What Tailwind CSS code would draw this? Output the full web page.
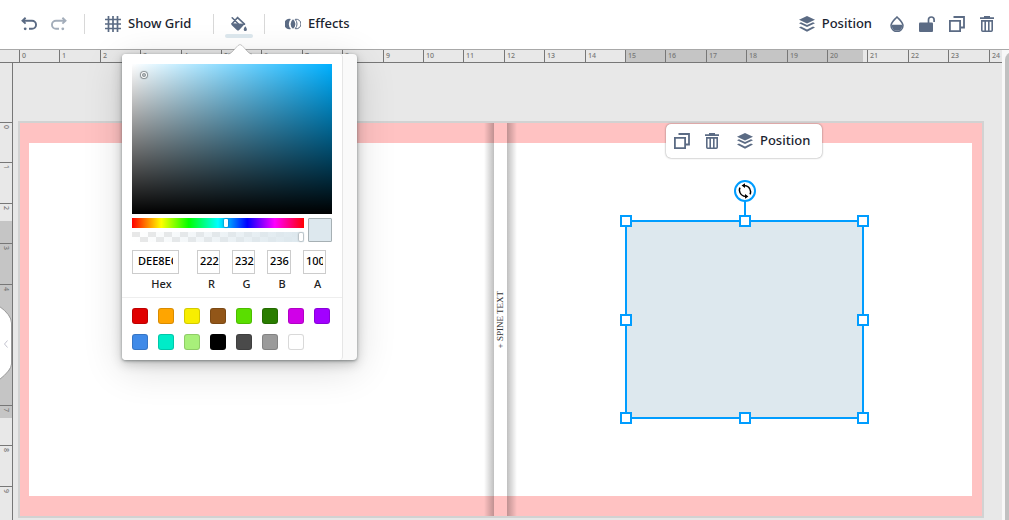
<!DOCTYPE html>
<html lang="en">
<head>
<meta charset="utf-8">
<meta name="viewport" content="width=device-width, initial-scale=1">
<title>Cover editor</title>
<script src="https://cdn.jsdelivr.net/npm/@tailwindcss/browser@4"></script>
</head>
<body class="flex h-screen flex-col overflow-hidden bg-white font-['Noto_Sans',sans-serif] text-[13px] font-medium text-[#1b2430]">

<!-- Icon sprite -->
<svg class="hidden" aria-hidden="true">
  <symbol id="undo" viewBox="0 0 16 16"><path d="M4.600 1.800L1.500 4.700l3.100 2.900M2 4.700h9a3.900 3.900 0 0 1 0 8.100H8" fill="none" stroke="currentColor" stroke-width="1.900"/><circle cx="4.200" cy="12.800" r="1.400" fill="currentColor"/></symbol>
  <symbol id="grid" viewBox="0 0 16 16"><path d="M3.500 0v16M8 0v16M12.500 0v16M0 3.500h16M0 8h16M0 12.500h16" fill="none" stroke="currentColor" stroke-width="1.700"/></symbol>
  <symbol id="bucket" viewBox="0 0 16 16"><path d="M1.200 1.800l6 6M6.600 1.400L1.300 7.600M6.600 1.600l6.900 6.600" stroke="currentColor" stroke-width="1.600" stroke-linecap="round" fill="none"/><path d="M.2 7.300L14 7.800 8.200 14q-1.200 1.200-2.400 0L.8 9.300Q0 8.300.2 7.300z" fill="currentColor"/><path d="M14.300 10.300q1.600 2 1.600 3.200a1.600 1.600 0 0 1-3.200 0q0-1.200 1.600-3.200z" fill="currentColor"/></symbol>
  <symbol id="effects" viewBox="0 0 16 16"><path d="M5.900 3a5.200 5.200 0 1 0 0 10a7 7 0 0 1 0-10z" fill="currentColor"/><path d="M8 3.200a6 6 0 0 1 0 9.600a6 6 0 0 1 0-9.600z" fill="currentColor"/><path d="M10.200 3.300a4.800 4.800 0 1 1 0 9.400a7 7 0 0 0 0-9.400z" fill="none" stroke="currentColor" stroke-width="1"/></symbol>
  <symbol id="layers" viewBox="0 0 16 16"><path d="M8 0l8 3.700-8 3.700-8-3.700z" fill="currentColor"/><path d="M0 7.200l2-.9 6 2.800 6-2.800 2 .9-8 3.900zM0 11.500l2-.9 6 2.800 6-2.800 2 .9L8 15.800z" fill="currentColor"/></symbol>
  <symbol id="drop" viewBox="0 0 16 16"><path d="M8 .9c3 3.200 6 5.500 6 8.700a6 6 0 0 1-12 0C2 6.400 5 4.100 8 .9z" fill="none" stroke="currentColor" stroke-width="1.500"/><path d="M2.500 8.700h11q-.3 6-5.500 6t-5.500-6z" fill="currentColor"/></symbol>
  <symbol id="unlock" viewBox="0 0 16 16"><rect y="6.500" width="14" height="9.500" rx="1" fill="currentColor"/><path d="M9.500 7V3.800a2.800 2.800 0 0 1 5.600 0V6" fill="none" stroke="currentColor" stroke-width="1.700"/></symbol>
  <symbol id="copy" viewBox="0 0 16 16"><path d="M.9 4.900h10.200v10.200H.9zM4.500 1h10.500v10.500h-3" fill="none" stroke="currentColor" stroke-width="1.800"/></symbol>
  <symbol id="trash" viewBox="0 0 16 16"><path d="M5 0h6v1.300h4V3H1V1.300h4z" fill="currentColor"/><path d="M2.800 4.500V14.300q0 .9.900.9h8.600q.9 0 .9-.9V4.500M2 4.900h12M6.200 5v10M9.800 5v10" fill="none" stroke="currentColor" stroke-width="1.600"/></symbol>
</svg>

<header class="flex h-[50px] shrink-0 items-center justify-between border-b border-[#a8a8a8] bg-white pr-3.5 pb-px pl-[21px]">
  <div class="flex items-center">
    <button class="text-[#5b6b84]" aria-label="Undo"><svg class="size-4"><use href="#undo"/></svg></button>
    <button class="ml-3.5 text-[#a3adba]" aria-label="Redo"><svg class="size-4 -scale-x-100"><use href="#undo"/></svg></button>
    <span class="ml-[17px] h-5 w-px bg-[#d8d8d8]"></span>
    <button class="ml-5 flex w-22 items-center gap-[7px] whitespace-nowrap"><svg class="size-4 shrink-0 text-[#5b6b84]"><use href="#grid"/></svg>Show Grid</button>
    <span class="ml-5 h-5 w-px bg-[#d8d8d8]"></span>
    <button class="relative mx-[11px] flex h-7 w-7 items-center justify-center text-[#5b6b84]" aria-label="Fill color"><svg class="size-4"><use href="#bucket"/></svg><span class="absolute inset-x-0 bottom-0 h-1 rounded-full bg-[#dde8ee]"></span></button>
    <span class="h-5 w-px bg-[#d8d8d8]"></span>
    <button class="ml-5 flex items-center gap-[7px]"><svg class="size-4 text-[#5b6b84]"><use href="#effects"/></svg>Effects</button>
  </div>
  <div class="flex items-center gap-3.5 text-[#5b6b84]">
    <button class="mr-[3px] flex items-center gap-[7px]"><svg class="size-4"><use href="#layers"/></svg><span class="text-[#1b2430]">Position</span></button>
    <button aria-label="Opacity"><svg class="size-4"><use href="#drop"/></svg></button>
    <button aria-label="Unlock"><svg class="size-4"><use href="#unlock"/></svg></button>
    <button aria-label="Duplicate"><svg class="size-4"><use href="#copy"/></svg></button>
    <button aria-label="Delete"><svg class="size-4"><use href="#trash"/></svg></button>
  </div>
</header>

<main class="relative flex min-h-0 flex-1 bg-[#f8f8f8]">
  <div class="flex min-w-0 flex-1 flex-col bg-[#e8e8e8]">
    <div id="ruler-x" class="relative h-[13px] shrink-0 overflow-hidden border-b border-[#777] text-[7px] leading-[12px] text-[#777]">
      <div class="absolute inset-y-0 left-[625px] w-[238px] bg-[#c5c5c5]"></div>
    </div>
    <div class="flex min-h-0 flex-1">
      <div id="ruler-y" class="relative w-[13px] shrink-0 overflow-hidden border-r border-[#777] text-[7px] leading-[12px] text-[#777]">
        <div class="absolute inset-x-0 top-[158px] h-[197px] bg-[#c5c5c5]"></div>
      </div>

      <section class="relative min-w-0 flex-1 overflow-hidden" aria-label="Canvas">
        <!-- Cover spread -->
        <div class="absolute top-[58px] left-[5px] h-[397px] w-[966px] border-2 border-[#d2d2d2] bg-[#ffc2c2]">
          <div class="h-full pt-5 pr-[10px] pb-5 pl-[9px]"><div class="h-full bg-white"></div></div>
          <div class="absolute inset-y-0 left-[464px] flex w-[33px]">
            <div class="w-[10px] bg-linear-to-r from-transparent to-black/25"></div>
            <div class="flex w-[13px] items-center justify-center"><span class="rotate-180 font-['Liberation_Serif',serif] text-[9px] leading-none font-normal whitespace-nowrap text-[#333] [writing-mode:vertical-rl]">+ SPINE TEXT</span></div>
            <div class="w-[10px] bg-linear-to-r from-black/25 to-transparent"></div>
          </div>
        </div>

        <!-- Selected rectangle -->
        <div class="absolute top-[157px] left-[612px] h-[199px] w-[239px] border-2 border-[#009dff] bg-[#dde8ee]">
          <div class="absolute -inset-px">
            <span class="absolute -top-5 left-1/2 h-5 w-[2px] -translate-x-1/2 bg-[#009dff]"></span>
            <button class="absolute -top-[41px] left-1/2 flex size-[22px] -translate-x-1/2 items-center justify-center rounded-full border-2 border-[#009dff] bg-white text-black" aria-label="Rotate">
              <svg class="size-4 shrink-0" viewBox="0 0 16 16"><path d="M6.500 2.600Q12.800 2.600 13.600 8.500q.1 1.500-.6 2.800M9.500 13.400Q3.200 13.400 2.400 7.500q-.1-1.500.6-2.800" fill="none" stroke="currentColor" stroke-width="1.500"/><path d="M8 .2v4.800L4.600 2.600zM8 11v4.800l3.400-2.400z" fill="currentColor"/></svg>
            </button>
            <span class="absolute top-0 left-0 size-3 -translate-1/2 border-2 border-[#009dff] bg-white"></span>
            <span class="absolute top-0 left-1/2 size-3 -translate-1/2 border-2 border-[#009dff] bg-white"></span>
            <span class="absolute top-0 left-full size-3 -translate-1/2 border-2 border-[#009dff] bg-white"></span>
            <span class="absolute top-1/2 left-0 size-3 -translate-1/2 border-2 border-[#009dff] bg-white"></span>
            <span class="absolute top-1/2 left-full size-3 -translate-1/2 border-2 border-[#009dff] bg-white"></span>
            <span class="absolute top-full left-0 size-3 -translate-1/2 border-2 border-[#009dff] bg-white"></span>
            <span class="absolute top-full left-1/2 size-3 -translate-1/2 border-2 border-[#009dff] bg-white"></span>
            <span class="absolute top-full left-full size-3 -translate-1/2 border-2 border-[#009dff] bg-white"></span>
          </div>
        </div>

        <!-- Context toolbar -->
        <div class="absolute top-[61px] left-[653px] flex h-[34px] items-center rounded-[5px] bg-white pr-3 pl-2 text-[#5b6b84] shadow-[0_0_2px_rgba(0,0,0,0.5)]">
          <button aria-label="Duplicate"><svg class="size-4"><use href="#copy"/></svg></button>
          <button class="ml-3.5" aria-label="Delete"><svg class="size-4"><use href="#trash"/></svg></button>
          <button class="ml-[17px] flex items-center gap-[7px]"><svg class="size-4"><use href="#layers"/></svg><span class="text-[#1b2430]">Position</span></button>
        </div>
      </section>
    </div>
  </div>

  <div class="w-[7px] shrink-0 overflow-hidden bg-[#f8f8f8] pt-0.5 pl-[3px]"><div class="h-full w-2 rounded-tl-full bg-[#c1c1c1]"></div></div>

  <!-- Side panel handle -->
  <button class="absolute top-[254px] left-0 h-20 w-3" aria-label="Collapse panel">
    <svg class="h-20 w-3" viewBox="0 0 12 80"><path d="M-1 2Q11.500 11 11.500 19V60Q11.500 66 -1 76" fill="#fff" stroke="#999"/><path d="M7.500 36.500L4.500 40l3 3.500" fill="none" stroke="#c3c3cf"/></svg>
  </button>

  <!-- Fill colour popover -->
  <div class="absolute top-1 left-[122px] flex w-[235px] rounded-[4px] bg-[#fafafa] text-[11px] text-[#222] shadow-[0_1px_3px_rgba(60,70,70,0.55),0_4px_12px_rgba(0,0,0,0.2),0_8px_40px_rgba(0,0,0,0.14)]">
    <svg class="absolute -top-[11px] left-[106px] h-3 w-6" viewBox="0 0 24 12"><path d="M0 12Q2 11 4 9L10 2.500Q12 .5 14 2.500L20 9Q22 11 24 12z" fill="#fff"/><path d="M0 11Q2 11 4 9L10 2.500Q12 .5 14 2.500L20 9Q22 11 24 11" fill="none" stroke="#000" stroke-opacity=".25" stroke-width=".8"/></svg>
    <div class="w-[221px] rounded-[4px] border-r border-[#e6e6e6] bg-white">
      <div class="px-[10px] pt-[10px]">
        <div class="relative h-[150px] bg-[#00b0ff] bg-[linear-gradient(to_top,#000,transparent),linear-gradient(to_right,#fff,transparent)]">
          <span class="absolute top-2 left-[9px] size-1.5 rounded-full border border-white bg-black/20 shadow-[inset_0_0_1px_#000,0_0_1px_1px_#0006]"></span>
        </div>
        <div class="mt-1 flex gap-1">
          <div class="flex-1 space-y-1">
            <div class="relative h-[10px] bg-[linear-gradient(to_right,#f00_0%,#ff0_17%,#0f0_33%,#0ff_50%,#00f_67%,#f0f_83%,#f00_100%)]"><span class="absolute top-px left-[92px] h-2 w-1 rounded-[1px] bg-white shadow-[0_0_2px_#0008]"></span></div>
            <div class="relative h-[10px] bg-[linear-gradient(to_right,transparent,#dde8ee),conic-gradient(#fff_25%,#e8e8e8_0_50%,#fff_0_75%,#e8e8e8_0)] bg-[size:100%_100%,16px_10px]"><span class="absolute top-px right-px h-2 w-1 rounded-[1px] bg-white shadow-[0_0_2px_#0009]"></span></div>
          </div>
          <div class="size-6 rounded-[1px] border border-[#a6b0b4] bg-[#dde8ee]"></div>
        </div>
        <div class="mt-2 flex gap-3 text-center">
          <div class="mr-1.5 w-[47px]"><input id="hex" value="DEE8EC" class="block h-6 w-full border border-[#ccc] px-[5px] pb-[3px] text-black"><label for="hex" class="ml-3 block pt-[2px] leading-4">Hex</label></div>
          <div class="w-[23px]"><input id="r" value="222" class="block h-6 w-full border border-[#ccc] pb-[3px] pl-[2px] text-black"><label for="r" class="ml-1.5 block pt-[2px] leading-4">R</label></div>
          <div class="w-[23px]"><input id="g" value="232" class="block h-6 w-full border border-[#ccc] pb-[3px] pl-[2px] text-black"><label for="g" class="ml-1.5 block pt-[2px] leading-4">G</label></div>
          <div class="w-[24px]"><input id="b" value="236" class="block h-6 w-full border border-[#ccc] pb-[3px] pl-[2px] text-black"><label for="b" class="ml-1.5 block pt-[2px] leading-4">B</label></div>
          <div class="w-[23px]"><input id="a" value="100" class="block h-6 w-full border border-[#ccc] pr-[2px] pb-[3px] pl-[2px] text-black"><label for="a" class="ml-1.5 block pt-[2px] leading-4">A</label></div>
        </div>
      </div>
      <div class="mt-[5px] flex flex-wrap gap-[10px] border-t border-[#eee] p-[10px] *:size-4 *:rounded-[3px] *:border *:border-black/15">
        <button class="bg-[#e00000]" aria-label="Red"></button>
        <button class="bg-[#ffa500]" aria-label="Orange"></button>
        <button class="bg-[#f8ee00]" aria-label="Yellow"></button>
        <button class="bg-[#925618]" aria-label="Brown"></button>
        <button class="bg-[#5ade00]" aria-label="Green"></button>
        <button class="bg-[#2a7d00]" aria-label="Dark green"></button>
        <button class="bg-[#d000e8]" aria-label="Magenta"></button>
        <button class="bg-[#a200ff]" aria-label="Violet"></button>
        <button class="bg-[#3f8ae8]" aria-label="Blue"></button>
        <button class="bg-[#00ecc8]" aria-label="Turquoise"></button>
        <button class="bg-[#a8f07a]" aria-label="Light green"></button>
        <button class="bg-black" aria-label="Black"></button>
        <button class="bg-[#4a4a4a]" aria-label="Dark gray"></button>
        <button class="bg-[#9b9b9b]" aria-label="Gray"></button>
        <button class="bg-white" aria-label="White"></button>
      </div>
    </div>
  </div>
</main>

<script>
  // Ruler marks: one inch equals 40.4 canvas pixels at this zoom.
  const inch = 40.4;
  const rx = document.getElementById('ruler-x');
  const ry = document.getElementById('ruler-y');
  for (let i = 0; i <= 24; i++) {
    const t = document.createElement('div');
    t.className = 'absolute inset-y-0 border-l border-[#777] pl-[2px]';
    t.style.left = Math.round(19 + i * inch) + 'px';
    t.textContent = i;
    rx.append(t);
  }
  for (let i = 0; i <= 9; i++) {
    const t = document.createElement('div');
    t.className = 'absolute inset-x-0 border-t border-[#777] pt-[2px] [writing-mode:vertical-rl]';
    t.style.top = Math.round(59 + i * inch) + 'px';
    t.textContent = i;
    ry.append(t);
  }
</script>
</body>
</html>
